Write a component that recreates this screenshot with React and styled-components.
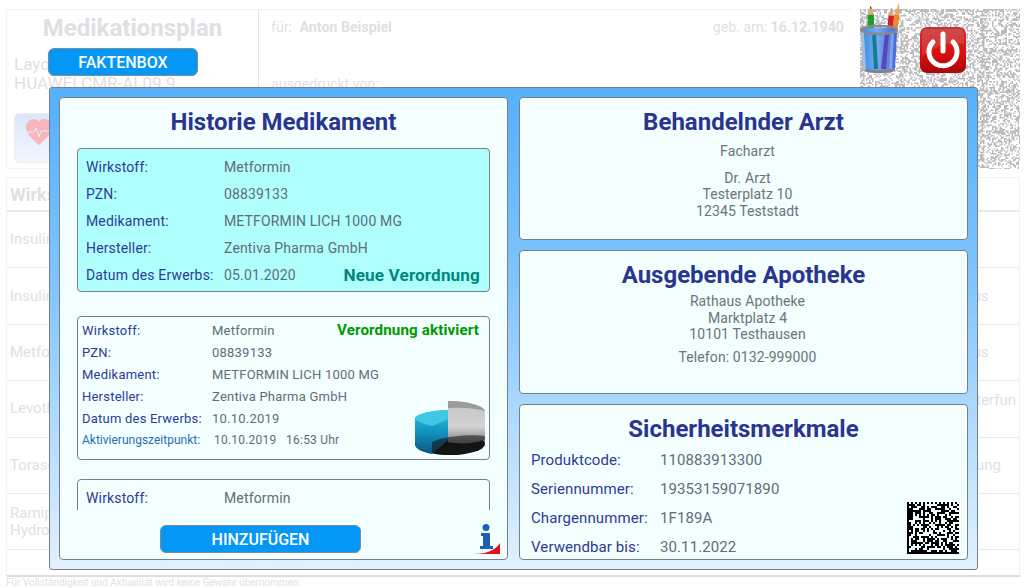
import React from 'react'
import styled, { createGlobalStyle } from 'styled-components'

const GlobalStyle = createGlobalStyle`
  html, body { margin:0; padding:0; background:#fff; }
  body { font-family:Roboto, "Liberation Sans", sans-serif; overflow:hidden; }
  * { box-sizing:border-box; }
  svg { display:block; }
`

const Page = styled.div`
  position:relative;
  width:1033px;
  height:588px;
  overflow:hidden;
  padding:9px 13px 0 6px;
  color:#dfe0e4;
`

const Header = styled.div`
  display:flex;
  height:160px;
`

const PlanBox = styled.div`
  width:253px;
  padding:4px 7px 0;
  border:1px solid #f2f2f4;
  border-right:1px solid #e6e6ea;
`

const PlanTitle = styled.div`
  font-size:24px;
  font-weight:700;
  text-align:center;
  line-height:28px;
  margin-bottom:13px;
`

const PlanDevice = styled.div`
  font-size:17px;
  line-height:19px;
`

const HeartBox = styled.div`
  width:50px;
  height:50px;
  margin-top:20px;
  border:1px solid #e8ecf4;
  border-radius:5px;
  background:linear-gradient(#d9e7fa, #f4f8fe);
  display:flex;
  justify-content:center;
  padding-top:4px;
`

const PatientBox = styled.div`
  width:593px;
  padding:8px 8px 0 12px;
  border-top:1px solid #f2f2f4;
  font-size:14.2px;
  line-height:18px;
`

const PatientRow = styled.div`
  display:flex;
  justify-content:space-between;
`

const PrintedBy = styled.div`
  margin-top:39px;
`

const PatientName = styled.b`
  font-weight:700;
  margin-left:4px;
`

const PatternBox = styled.div`
  position:relative;
  width:160px;
  margin-left:8px;
`

const CupIcon = styled.div`
  position:absolute;
  left:0;
  top:-7px;
`

const PowerIcon = styled.div`
  position:absolute;
  left:59px;
  top:17px;
`

const Table = styled.div`
  margin-top:8px;
  height:398px;
  border:1px solid #f2f2f4;
  border-bottom:none;
`

const TableHead = styled.div`
  height:34px;
  padding-left:3px;
  font-size:18px;
  font-weight:700;
  line-height:33px;
  border-bottom:2px solid #e8e8ea;
`

const TableRow = styled.div`
  display:flex;
  align-items:center;
  height:56.4px;
  padding-left:3px;
  font-size:15px;
  line-height:17px;
  border-bottom:1px solid #eaeaec;
`

const DrugCell = styled.div`
  width:864px;
  white-space:pre-line;
`

const ReasonCell = styled.div`
  width:146px;
  overflow-wrap:anywhere;
`

const Footer = styled.div`
  border-top:2px solid #dcdcde;
  font-size:10px;
  line-height:11px;
  color:#e2e2e4;
`

const BlueButton = styled.div`
  width:${({$w})=>$w}px;
  height:28px;
  background:#0497f5;
  border:1px solid #7d8b9b;
  border-radius:6px;
  color:#fff;
  font-size:16px;
  font-weight:500;
  line-height:28px;
  text-align:center;
`

const FaktenButton = styled(BlueButton)`
  position:absolute;
  left:48px;
  top:48px;
`

const Modal = styled.div`
  position:absolute;
  left:49px;
  top:87px;
  width:929px;
  height:483px;
  padding:9px;
  display:grid;
  grid-template-columns:449px 449px;
  gap:11px;
  border:1px solid #77808a;
  border-radius:3px;
  background:linear-gradient(#55b0fb, #80c4fd 40%, #e2f1fe);
`

const Panel = styled.div`
  position:relative;
  background:#f3feff;
  border:1px solid #77808a;
  border-radius:4px;
`

const HistoryPanel = styled(Panel)`
  padding:0 17px;
`

const Column = styled.div`
  display:grid;
  grid-template-rows:143px 144px 156px;
  gap:10px;
`

const Title = styled.h2`
  margin:0;
  color:#2a3590;
  font-size:24px;
  font-weight:700;
  line-height:30px;
  padding-top:9px;
  text-align:center;
`

const History = styled.div`
  height:362px;
  margin-top:11px;
  overflow:hidden;
`

const Entry = styled.div`
  position:relative;
  height:144px;
  margin-bottom:${({$mb})=>$mb || 0}px;
  padding:${({$small})=>$small ? '2px 10px 0 4px' : '4px 9px 0 8px'};
  background:${({$hl})=>$hl ? '#b0ffff' : 'transparent'};
  border:1.5px solid #77808a;
  border-radius:4px;
`

const Row = styled.div`
  display:flex;
  align-items:center;
  height:${({$small})=>$small ? 22 : 27}px;
  font-size:${({$small,$soft})=>$soft ? 12 : $small ? 13 : 14}px;
  letter-spacing:${({$small})=>$small ? 0.22 : 0.15}px;
`

const Label = styled.span`
  width:${({$small})=>$small ? 130 : 138}px;
  color:${({$soft})=>$soft ? '#2c6cb4' : '#2d3c94'};
  letter-spacing:${({$soft})=>$soft ? '0' : 'inherit'};
  flex:none;
`

const Value = styled.span`
  color:#5f6d78;
  margin-left:${({$shift})=>$shift || 0}px;
  white-space:pre;
`

const Status = styled.span`
  margin-left:auto;
  color:${({$c})=>$c};
  font-weight:700;
  font-size:${({$small})=>$small ? 15.2 : 17.2}px;
  letter-spacing:0.1px;
`

const PieIcon = styled.div`
  position:absolute;
  right:3px;
  bottom:3px;
`

const PanelFooter = styled.div`
  display:flex;
  justify-content:space-between;
  align-items:flex-start;
  margin-top:15px;
  padding-left:83px;
  margin-right:-10px;
`

const InfoIcon = styled.div`
  margin-top:-1px;
`

const Lines = styled.div`
  padding-left:8px;
  padding-top:${({$top})=>$top}px;
  color:#6b747c;
  font-size:14px;
  line-height:16.6px;
  text-align:center;
  letter-spacing:0.1px;
`

const Gap = styled.div`
  height:${({$h})=>$h}px;
`

const CodeList = styled.div`
  padding-top:1px;
`

const CodeRow = styled.div`
  display:flex;
  height:29px;
  align-items:center;
  padding-left:11px;
  font-size:15px;
  letter-spacing:0.1px;
`

const CodeLabel = styled.span`
  width:129px;
  color:#2d3c94;
`

const CodeValue = styled.span`
  color:#5f6d78;
`

const MatrixIcon = styled.div`
  position:absolute;
  right:8px;
  bottom:5px;
`

const seeded = (seed) => {
  let s = seed
  return () => {
    s = (s * 1664525 + 1013904223) % 4294967296
    return (s >>> 8) / 16777216
  }
}

const noisePath = () => {
  const rnd = seeded(17)
  let d = ''
  for (let y = 0; y < 107; y++) {
    for (let x = 0; x < 107; x++) {
      const onLine = x % 27 < 2 || y % 27 < 2
      if (rnd() < (onLine ? 0.7 : 0.45)) d += `M${x*1.5} ${y*1.5}h1.5v1.5h-1.5z`
    }
  }
  return d
}

const matrixPath = () => {
  const rnd = seeded(91)
  const n = 26
  let d = ''
  for (let y = 0; y < n; y++) {
    for (let x = 0; x < n; x++) {
      let on = rnd() < 0.52
      if (x === 0 || y === n - 1) on = true
      if (y === 0) on = x % 2 === 0
      if (x === n - 1) on = y % 2 === 1
      if (on) d += `M${x*2} ${y*2}h2v2h-2z`
    }
  }
  return d
}

const Noise = () => (
  <svg width="160" height="160" viewBox="0 0 160 160">
    <path d={noisePath()} fill="#bcbcbf"/>
  </svg>
)

const Heart = () => (
  <svg width="30" height="28" viewBox="0 0 30 28">
    <path d="M15 27C7 20 2 15 2 9c0-5 4-8 7.500-8 2.500 0 4.500 1 5.500 3 1-2 3-3 5.500-3C24 1 28 4 28 9c0 6-5 11-13 18z" fill="#f6b6bc"/>
    <path d="M0 14h10l2-4 3 9 2-6h13" fill="none" stroke="#e8eef6" strokeWidth="1"/>
  </svg>
)

const Cup = () => (
  <svg width="42" height="72" viewBox="0 0 42 72">
    <defs>
      <linearGradient id="cupBody" x1="0" x2="1" y1="0" y2="0">
        <stop offset="0" stopColor="#2f8ee6"/>
        <stop offset="0.45" stopColor="#78a8f4"/>
        <stop offset="1" stopColor="#3f66d6"/>
      </linearGradient>
    </defs>
    <path d="M7.500 34V12.500h6.500V34z" fill="#1f9a2c"/>
    <path d="M7.500 12.500L10.700 4l3.300 8.500z" fill="#d8a878"/>
    <path d="M9.800 6.500L10.700 4l1 2.500z" fill="#3c2a1a"/>
    <path d="M27 34l1.500-21 5.500 1-1.500 20z" fill="#d81e24"/>
    <path d="M28.500 13l3.200-8 2.300 9z" fill="#d8a878"/>
    <path d="M32.500 34l2-22 5 1.500-3 20.500z" fill="#ea8c24"/>
    <path d="M34.500 12l4.500-11 .5 12.500z" fill="#e2a868"/>
    <path d="M1 28c0-3 36-3 36 0l-2 40c0 4-31 4-32 0z" fill="url(#cupBody)"/>
    <path d="M12 31l2 36h4l-2-36z" fill="#0f808a"/>
    <path d="M25 31l-4 36h5l3-36z" fill="#5b48b8"/>
    <path d="M31 31l-2 36h3l2-36z" fill="#a8bcec" opacity="0.6"/>
    <ellipse cx="19" cy="28" rx="18" ry="4" fill="none" stroke="#858a92" strokeWidth="2.500"/>
    <path d="M3 65c3 4 29 4 32 0l0 3c-3 4-29 4-32 0z" fill="#80858c"/>
    <path d="M1 30l2 38h3L4 31z" fill="#c4ccd4" opacity="0.75"/>
  </svg>
)

const Power = () => (
  <svg width="48" height="48" viewBox="0 0 48 48">
    <defs>
      <linearGradient id="powerBg" x1="0" x2="0" y1="0" y2="1">
        <stop offset="0" stopColor="#c23535"/>
        <stop offset="0.55" stopColor="#dc1010"/>
        <stop offset="1" stopColor="#a80808"/>
      </linearGradient>
    </defs>
    <rect x="1" y="1" width="46" height="46" rx="7" fill="url(#powerBg)"/>
    <path d="M3 8q0-5 5-5h32q5 0 5 5v10Q24 14 3 30z" fill="#fff" opacity="0.12"/>
    <path d="M14 16a14 14 0 1 0 20 0" fill="none" stroke="#fff" strokeWidth="5" strokeLinecap="round"/>
    <path d="M24 8v17" stroke="#fff" strokeWidth="5" strokeLinecap="round"/>
  </svg>
)

const Pie = () => (
  <svg width="72" height="56" viewBox="0 0 72 56">
    <defs>
      <linearGradient id="pieBlue" x1="0" x2="0" y1="0" y2="1">
        <stop offset="0" stopColor="#34c4e2"/>
        <stop offset="0.5" stopColor="#1192c0"/>
        <stop offset="1" stopColor="#0a5580"/>
      </linearGradient>
      <linearGradient id="pieGrey" x1="0" x2="0" y1="0" y2="1">
        <stop offset="0" stopColor="#c4c4c4"/>
        <stop offset="0.6" stopColor="#d2d2d2"/>
        <stop offset="1" stopColor="#7e7e7e"/>
      </linearGradient>
    </defs>
    <ellipse cx="36" cy="44" rx="35" ry="11" fill="#1a1a1a"/>
    <path d="M1 18c2-4 18-8 33-8v30L18 54C8 52 1 49 1 44z" fill="url(#pieBlue)"/>
    <path d="M1 18c2-4 18-8 33-8v9L18 26C10 24 3 22 1 18z" fill="#3fc8e4"/>
    <path d="M34 1c20 0 36 5 37 10v28c-6 4-24 6-37 3z" fill="url(#pieGrey)"/>
    <path d="M34 1c20 0 36 5 37 10-10-3-24-4-37-3z" fill="#9c9c9c"/>
    <path d="M18 42c10-6 40-8 53-6v8c-2 6-20 11-35 11-6 0-12-1-18-2z" fill="#111" opacity="0.55"/>
  </svg>
)

const InfoMark = () => (
  <svg width="27" height="31" viewBox="0 0 27 31">
    <circle cx="13" cy="3.500" r="3.500" fill="#1d5fb8"/>
    <path d="M8 9h9v13h3v3H7v-3h3V12H8z" fill="#1d5fb8"/>
    <path d="M0 30c12 0 22-3 27-11v11z" fill="#ea0f1f"/>
  </svg>
)

const Matrix = () => (
  <svg width="52" height="52" viewBox="0 0 52 52" shapeRendering="crispEdges">
    <path d={matrixPath()} fill="#000"/>
  </svg>
)

const drugs = [
  ['Insulin', ''],
  ['Insulin', 'Diabetes mellitus'],
  ['Metformin', 'Diabetes mellitus'],
  ['Levothyroxin', 'Schilddrüsenunterfunktion'],
  ['Torasemid', 'Wassereinlagerung'],
  ['Ramipril\nHydrochlorothiazid', ''],
]

const baseRows = [
  ['Wirkstoff:', 'Metformin'],
  ['PZN:', '08839133'],
  ['Medikament:', 'METFORMIN LICH 1000 MG'],
  ['Hersteller:', 'Zentiva Pharma GmbH'],
]

const codes = [
  ['Produktcode:', '110883913300'],
  ['Seriennummer:', '19353159071890'],
  ['Chargennummer:', '1F189A'],
  ['Verwendbar bis:', '30.11.2022'],
]

const App = () => {
  return (
    <Page>
      <GlobalStyle/>
      <Header>
        <PlanBox>
          <PlanTitle>Medikationsplan</PlanTitle>
          <PlanDevice>Layout<br/>HUAWEI CMR-AL09.9</PlanDevice>
          <HeartBox><Heart/></HeartBox>
        </PlanBox>
        <PatientBox>
          <PatientRow>
            <span>für: <PatientName>Anton Beispiel</PatientName></span>
            <span>geb. am: <b>16.12.1940</b></span>
          </PatientRow>
          <PrintedBy>ausgedruckt von:</PrintedBy>
        </PatientBox>
        <PatternBox>
          <Noise/>
          <CupIcon><Cup/></CupIcon>
          <PowerIcon><Power/></PowerIcon>
        </PatternBox>
      </Header>

      <Table>
        <TableHead>Wirkstoff</TableHead>
        {drugs.map(([drug,reason],i)=>(
          <TableRow key={i}>
            <DrugCell>{drug}</DrugCell>
            <ReasonCell>{reason}</ReasonCell>
          </TableRow>
        ))}
      </Table>
      <Footer>Für Vollständigkeit und Aktualität wird keine Gewähr übernommen.</Footer>

      <FaktenButton $w={150}>FAKTENBOX</FaktenButton>

      <Modal>
        <HistoryPanel>
          <Title>Historie Medikament</Title>
          <History>
            <Entry $hl $mb={24}>
              {baseRows.map(([l,v])=>(
                <Row key={l}><Label>{l}</Label><Value>{v}</Value></Row>
              ))}
              <Row>
                <Label>Datum des Erwerbs:</Label><Value>05.01.2020</Value>
                <Status $c="#00897b">Neue Verordnung</Status>
              </Row>
            </Entry>
            <Entry $small $mb={19}>
              {baseRows.map(([l,v],i)=>(
                <Row $small key={l}>
                  <Label $small>{l}</Label><Value>{v}</Value>
                  {i===0 && <Status $small $c="#009a00">Verordnung aktiviert</Status>}
                </Row>
              ))}
              <Row $small><Label $small>Datum des Erwerbs:</Label><Value>10.10.2019</Value></Row>
              <Row $small $soft><Label $small $soft>Aktivierungszeitpunkt:</Label><Value $shift={2}>10.10.2019   16:53 Uhr</Value></Row>
              <PieIcon><Pie/></PieIcon>
            </Entry>
            <Entry>
              <Row><Label>Wirkstoff:</Label><Value>Metformin</Value></Row>
            </Entry>
          </History>
          <PanelFooter>
            <BlueButton $w={201}>HINZUFÜGEN</BlueButton>
            <InfoIcon><InfoMark/></InfoIcon>
          </PanelFooter>
        </HistoryPanel>

        <Column>
          <Panel>
            <Title>Behandelnder Arzt</Title>
            <Lines $top={6}>
              Facharzt
              <Gap $h={10}/>
              Dr. Arzt<br/>Testerplatz 10<br/>12345 Teststadt
            </Lines>
          </Panel>
          <Panel>
            <Title>Ausgebende Apotheke</Title>
            <Lines $top={3}>
              Rathaus Apotheke<br/>Marktplatz 4<br/>10101 Testhausen
              <Gap $h={6}/>
              Telefon: 0132-999000
            </Lines>
          </Panel>
          <Panel>
            <Title>Sicherheitsmerkmale</Title>
            <CodeList>
              {codes.map(([l,v])=>(
                <CodeRow key={l}><CodeLabel>{l}</CodeLabel><CodeValue>{v}</CodeValue></CodeRow>
              ))}
            </CodeList>
            <MatrixIcon><Matrix/></MatrixIcon>
          </Panel>
        </Column>
      </Modal>
    </Page>
  )
}

export default App
